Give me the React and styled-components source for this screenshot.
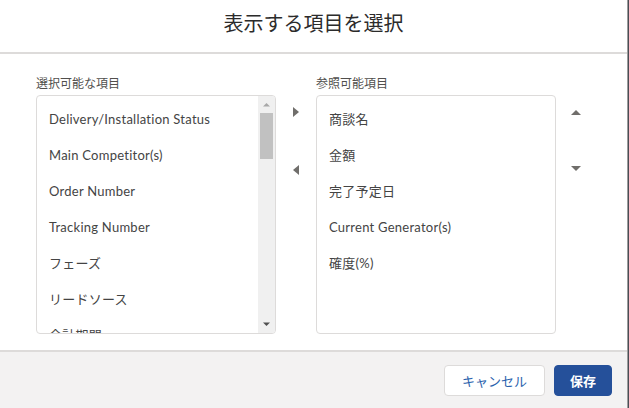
import React from 'react';
import { styled, createGlobalStyle } from 'styled-components';

const GlobalStyle = createGlobalStyle`
  html, body {
    margin: 0;
    padding: 0;
    background: #4a4d55;
  }
  body {
    font-family: Lato, "Noto Sans CJK JP", sans-serif;
    color: #3e3e3c;
  }
  * {
    box-sizing: border-box;
  }
`;

const available = [
  'Delivery/Installation Status',
  'Main Competitor(s)',
  'Order Number',
  'Tracking Number',
  'フェーズ',
  'リードソース',
  '会計期間',
];

const visible = ['商談名', '金額', '完了予定日', 'Current Generator(s)', '確度(%)'];

// 小さな三角アイコン
const Triangle = ({ dir, size = 10, color = '#706e6b' }) => {
  const points = {
    right: '2,0 8,5 2,10',
    left: '8,0 2,5 8,10',
    up: '0,8 5,3 10,8',
    down: '0,2 5,7 10,2',
  };
  return (
    <svg width={size} height={size} viewBox="0 0 10 10">
      <polygon points={points[dir]} fill={color} />
    </svg>
  );
};

const App = () => {
  return (
    <>
      <GlobalStyle />
      <ModalSection>
        <HeaderDiv>
          <TitleH2>表示する項目を選択</TitleH2>
        </HeaderDiv>
        <BodyDiv>
          <DualList>
            <LabelP>選択可能な項目</LabelP>
            <Spacer />
            <LabelP>参照可能項目</LabelP>
            <Spacer />

            <ListBox>
              <ItemsUl>
                {available.map((item) => (
                  <ItemLi key={item}>{item}</ItemLi>
                ))}
              </ItemsUl>
              <ScrollTrack>
                <ScrollButton>
                  <Triangle dir="up" size={7} color="#a8a8a8" />
                </ScrollButton>
                <ScrollThumb />
                <TrackFill />
                <ScrollButton>
                  <Triangle dir="down" size={7} color="#505050" />
                </ScrollButton>
              </ScrollTrack>
            </ListBox>

            <ArrowColumn gap="34px">
              <ArrowButton aria-label="右へ移動">
                <Triangle dir="right" />
              </ArrowButton>
              <ArrowButton aria-label="左へ移動">
                <Triangle dir="left" />
              </ArrowButton>
            </ArrowColumn>

            <ListBox>
              <ItemsUl>
                {visible.map((item) => (
                  <ItemLi key={item}>{item}</ItemLi>
                ))}
              </ItemsUl>
            </ListBox>

            <ArrowColumn gap="33px">
              <ArrowButton aria-label="上へ移動">
                <Triangle dir="up" />
              </ArrowButton>
              <ArrowButton aria-label="下へ移動">
                <Triangle dir="down" />
              </ArrowButton>
            </ArrowColumn>
          </DualList>
        </BodyDiv>
        <FooterDiv>
          <CancelButton>キャンセル</CancelButton>
          <SaveButton>保存</SaveButton>
        </FooterDiv>
      </ModalSection>
    </>
  );
};

export default App;

const ModalSection = styled.section`
  width: 628px;
  height: 408px;
  display: flex;
  flex-direction: column;
  background-color: #ffffff;
  border-right: 1px solid #9c9c9c;
`;

const HeaderDiv = styled.div`
  height: 54px;
  padding-top: 11px;
  border-bottom: 2px solid #dddbda;
  text-align: center;
`;

const TitleH2 = styled.h2`
  margin: 0;
  font-size: 20px;
  line-height: 25px;
  font-weight: 400;
  color: #2b2b2b;
`;

const BodyDiv = styled.div`
  flex: 1;
  padding: 22px 0 0 36px;
`;

const DualList = styled.div`
  display: grid;
  grid-template-columns: 240px 40px 240px 40px;
  grid-template-rows: 16px 239px;
  row-gap: 3px;
`;

const LabelP = styled.p`
  margin: 0;
  font-size: 12px;
  line-height: 16px;
  color: #514f4d;
`;

const Spacer = styled.div``;

const ListBox = styled.div`
  display: flex;
  border: 1px solid #dddbda;
  border-radius: 4px;
  overflow: hidden;
  background: #ffffff;
`;

const ItemsUl = styled.ul`
  flex: 1;
  margin: 0;
  padding: 5px 0 0;
  list-style: none;
  overflow: hidden;
`;

const ItemLi = styled.li`
  height: 36px;
  padding-left: 12px;
  font-size: 13px;
  line-height: 36px;
  letter-spacing: 0.25px;
  color: #444444;
  white-space: nowrap;
`;

const ScrollTrack = styled.div`
  width: 17px;
  display: flex;
  flex-direction: column;
  align-items: center;
  background: #f0f0f0;
`;

const ScrollButton = styled.div`
  width: 17px;
  height: 17px;
  display: flex;
  align-items: center;
  justify-content: center;
`;

const ScrollThumb = styled.div`
  width: 13px;
  height: 46px;
  background: #c1c1c1;
`;

const TrackFill = styled.div`
  flex: 1;
`;

const ArrowColumn = styled.div`
  display: flex;
  flex-direction: column;
  align-items: center;
  padding-top: 5px;
  gap: ${(props) => props.gap};
`;

const ArrowButton = styled.button`
  width: 24px;
  height: 24px;
  padding: 0;
  display: flex;
  align-items: center;
  justify-content: center;
  border: none;
  background: transparent;
  cursor: pointer;
`;

const FooterDiv = styled.div`
  height: 58px;
  display: flex;
  justify-content: flex-end;
  align-items: flex-start;
  gap: 9px;
  padding: 13px 15px 0;
  border-top: 2px solid #dddbda;
  background: #f3f2f2;

  & > button {
    height: 31px;
    border-radius: 4px;
    font-family: Lato, "Noto Sans CJK JP", sans-serif;
    font-size: 13px;
    cursor: pointer;
  }
`;

const CancelButton = styled.button`
  padding: 0 17px;
  border: 1px solid #dddbda;
  background: #ffffff;
  color: #2b62ad;
`;

const SaveButton = styled.button`
  padding: 0 15px;
  border: 1px solid #25509a;
  background: #25509a;
  color: #ffffff;
  font-weight: 700;
`;
